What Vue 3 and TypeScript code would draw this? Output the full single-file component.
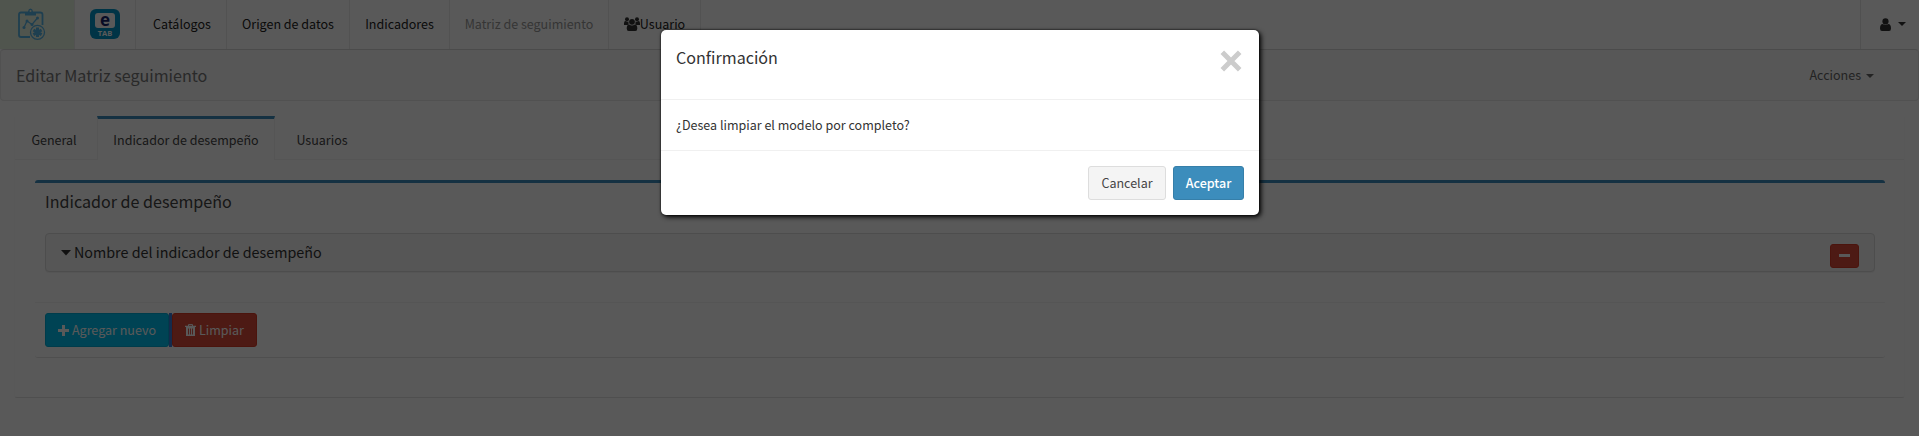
<script setup lang="ts">
import { ref } from 'vue'

interface NavItem {
  label: string
  key: string
  muted?: boolean
  icon?: boolean
}

const navItems: NavItem[] = [
  { label: 'Catálogos', key: 'catalogos' },
  { label: 'Origen de datos', key: 'origen' },
  { label: 'Indicadores', key: 'indicadores' },
  { label: 'Matriz de seguimiento', key: 'matriz', muted: true },
  { label: 'Usuario', key: 'usuario', icon: true },
]

const tabs = [
  { label: 'General', key: 'general' },
  { label: 'Indicador de desempeño', key: 'indicador' },
  { label: 'Usuarios', key: 'usuarios' },
]
const activeTab = ref('indicador')
const modalOpen = ref(true)
</script>

<template>
  <div class="page">
    <header class="topbar">
      <a class="brand">
        <svg width="29" height="33" viewBox="0 0 29 33" fill="none" stroke="#58b4e4">
          <path d="M8 4.500H4Q2 4.500 2 6.500V27Q2 29 4 29H13M19 4.500h4Q25.500 4.500 25.500 6.500V17" stroke-width="1.800" />
          <path d="M8 3.500h3Q11.500.6 13.500.6t2.500 2.900h3V7.500H8z" fill="#58b4e4" stroke="none" />
          <circle cx="13.500" cy="3" r="1" fill="#e6f2e0" stroke="none" />
          <path d="M7 19.500 10 13 15 16.500 20.500 10" stroke-width="1.300" />
          <g fill="#58b4e4" stroke="none">
            <circle cx="7" cy="19.500" r="1.500" /><circle cx="10" cy="13" r="1.500" />
            <circle cx="15" cy="16.500" r="1.500" /><circle cx="20.500" cy="10" r="1.500" />
          </g>
          <circle cx="20.500" cy="24.300" r="7" stroke-width="1.300" />
          <path d="M20.500 19.600v9.400M16.400 22l8.200 4.600M24.600 22l-8.200 4.600" stroke-width="3" />
        </svg>
      </a>
      <a class="etab">
        <span class="etab-logo"><span class="etab-e">e</span><span class="etab-t">TAB</span></span>
      </a>
      <a v-for="item in navItems" :key="item.key" class="nav-item" :class="[item.key, { muted: item.muted }]">
        <svg v-if="item.icon" width="16" height="14" viewBox="0 0 16 14" fill="#333">
          <circle cx="3" cy="2.200" r="2" /><circle cx="13" cy="2.200" r="2" />
          <path d="M0 8V6.200Q0 4 1.600 4q2 1 3 .5Q4 6.500 5 7.300L3.500 8zM16 8V6.200Q16 4 14.400 4q-2 1-3 .5Q12 6.500 11 7.300l1.500.7z" />
          <circle cx="8" cy="4.800" r="2.900" />
          <path d="M2.700 11.500Q2.700 7.600 5.200 7.600 8 9.600 10.800 7.600q2.500 0 2.500 3.900 0 2.500-2 2.500H4.700q-2 0-2-2.500z" />
        </svg>
        <span>{{ item.label }}</span>
      </a>
      <a class="user-menu">
        <svg width="11" height="13" viewBox="0 0 11 13" fill="#333">
          <circle cx="5.500" cy="3.400" r="3.100" />
          <path d="M0 10.500Q0 6 2.700 6q2.800 2 5.600 0Q11 6 11 10.500 11 13 9 13H2q-2 0-2-2.500z" />
        </svg>
        <i class="caret" />
      </a>
    </header>

    <nav class="subbar">
      <span class="sub-title">Editar Matriz seguimiento</span>
      <span class="actions">Acciones <i class="caret" /></span>
    </nav>

    <main class="tabs-box">
      <div class="tabs">
        <a v-for="t in tabs" :key="t.key" class="tab" :class="[t.key, { active: activeTab === t.key }]" @click="activeTab = t.key">{{ t.label }}</a>
      </div>
      <section class="box">
        <h3>Indicador de desempeño</h3>
        <div class="panel">
          <svg class="panel-caret" width="10" height="6" viewBox="0 0 10 6"><path d="M0 0h10L5 5.500z" fill="#333" /></svg>
          <span>Nombre del indicador de desempeño</span>
          <button class="minus" aria-label="Quitar"><i /></button>
        </div>
        <footer class="box-footer">
          <button class="btn info">
            <svg width="11" height="11" viewBox="0 0 11 11"><path d="M4 0h3v4h4v3H7v4H4V7H0V4h4z" fill="#fff" /></svg>
            <span>Agregar nuevo</span>
          </button>
          <i class="gap" />
          <button class="btn danger">
            <svg width="11" height="12" viewBox="0 0 11 12">
              <path d="M3.500 2V.6h4V2" fill="none" stroke="#fff" />
              <path d="M0 1.800h11V3H0zM1 3h9v9H1z" fill="#fff" />
              <path d="M3.500 4.500v6M5.500 4.500v6M7.500 4.500v6" stroke="#dd4b39" stroke-width=".9" />
            </svg>
            <span>Limpiar</span>
          </button>
        </footer>
      </section>
    </main>

    <div v-if="modalOpen" class="overlay">
      <div class="modal" role="dialog">
        <div class="modal-head">
          <span>Confirmación</span>
          <svg width="22" height="22" viewBox="0 0 22 22" @click="modalOpen = false"><path d="M2.300 2.300 19.700 19.700M19.700 2.300 2.300 19.700" stroke="#ccc" stroke-width="5" /></svg>
        </div>
        <div class="modal-body">¿Desea limpiar el modelo por completo?</div>
        <div class="modal-foot">
          <button class="btn default" @click="modalOpen = false">Cancelar</button>
          <button class="btn primary" @click="modalOpen = false">Aceptar</button>
        </div>
      </div>
    </div>
  </div>
</template>

<style>
html, body { margin: 0; overflow: hidden; }
</style>

<style scoped>
* { box-sizing: border-box; }
.page {
  position: relative;
  height: 436px;
  overflow: hidden;
  background: #fff;
  color: #333;
  font: 12.53px/20px "Noto Sans CJK SC", "Noto Sans", sans-serif;
  white-space: nowrap;
}
.topbar { display: flex; height: 49px; }
.topbar > a { border-right: 1px solid #eaeaea; flex: none; display: flex; }
.brand { width: 75px; padding: 8px 0 0 17px; background: #e6f2e0; }
.etab { width: 61px; padding: 9px 0 0 15px; }
.etab-logo {
  display: flex; flex-direction: column; align-items: center;
  width: 30px; height: 30px; border-radius: 6px; background: #0096c8; padding-top: 4px;
}
.etab-e {
  width: 20px; height: 15px; border-radius: 3px; background: #fff; color: #16246b;
  font: bold 17px/13px "Open Sans", sans-serif; text-align: center;
}
.etab-t { color: #fff; font: bold 7.5px/10px "Open Sans", sans-serif; }
.nav-item { align-items: center; justify-content: center; padding-bottom: 2px; color: #222; }
.nav-item.muted { color: #999; }
.catalogos { width: 91px; padding-left: 2px; }
.origen { width: 123px; }
.indicadores { width: 100px; }
.matriz { width: 159px; }
.usuario { width: 92px; }
.topbar > .user-menu {
  margin-left: auto; width: 59px; border-right: 0; border-left: 1px solid #e4e4e4;
  padding: 18px 0 0 19px; gap: 7px;
}
.caret { width: 0; height: 0; border: 4px solid transparent; border-top-color: currentColor; border-bottom: 0; }
.user-menu .caret { margin-top: 4px; }
.subbar {
  display: flex; align-items: center; justify-content: space-between;
  height: 52px; padding: 0 44px 1px 15px;
  border: 1px solid #e7e7e7; border-top-color: #d8d8d8; border-radius: 4px; background: #f8f8f8; color: #777;
}
.sub-title { font-size: 16.1px; }
.actions { display: flex; align-items: center; gap: 5px; color: #666; }
.actions .caret { margin-top: 3px; }
.tabs-box {
  margin: 15px 14px 0; height: 282px; border: 1px solid #fcfcfc;
  border-bottom-color: #e3e3e3; border-top: 0; border-radius: 3px;
}
.tabs { display: flex; height: 44px; border-bottom: 1px solid #f4f4f4; color: #444; }
.tab { height: 44px; padding-top: 11px; border-top: 3px solid transparent; text-align: center; }
.tab.active { border-top-color: #3c8dbc; border-left: 1px solid #f4f4f4; border-right: 1px solid #f4f4f4; background: #fff; }
.general { width: 82px; padding-right: 4px; }
.indicador { width: 178px; }
.usuarios { width: 94px; }
.box {
  margin: 20px 19px 0 20px; height: 178px; border-top: 3px solid #3c8dbc; border-radius: 3px;
  border-bottom: 1px solid #e3e3e3; display: flex; flex-direction: column; color: #444;
}
h3 { margin: 8px 10px 0; font-size: 16.1px; line-height: 20px; font-weight: 400; }
.panel {
  display: flex; margin: 22px 10px 0; height: 39px; padding: 8px 15px 0;
  border: 1px solid #ddd; border-radius: 4px; background: #f5f5f5; color: #333;
  font-size: 14.32px; line-height: 20px; box-shadow: 0 1px 1px rgba(0, 0, 0, .05);
}
.panel-caret { margin: 8px 3px 0 0; }
.minus {
  margin: 2px 0 0 auto; width: 29px; height: 24px; padding: 0; border: 1px solid #d73925;
  border-radius: 3px; background: #dd4b39; display: grid; place-items: center;
}
.minus i { width: 11px; height: 3px; background: #fff; margin-top: -1px; }
.box-footer { display: flex; margin-top: auto; height: 55px; padding: 10px; border-top: 1px solid #f4f4f4; }
.btn {
  display: flex; align-items: center; justify-content: center; height: 34px; padding: 0;
  border: 1px solid; border-radius: 3px; color: #fff; font: inherit;
}
.btn svg { margin-right: 3px; }
.info { width: 124px; background: #00c0ef; border-color: #00acd6; }
.danger { width: 85px; background: #dd4b39; border-color: #d73925; }
.gap { width: 3px; height: 34px; background: #3a7bdb; }
.overlay { position: absolute; inset: 0; background: rgba(0, 0, 0, .65); }
.modal {
  width: 598px; height: 185px; margin: 30px 0 0 661px; background: #fff; border-radius: 5px;
  box-shadow: 2px 2px 5px #000, 0 0 2px #000; color: #333;
}
.modal-head {
  display: flex; justify-content: space-between; height: 70px; padding: 17px 17px 0 15px;
  border-bottom: 1px solid #f0f0f0; font-size: 16.1px;
}
.modal-head svg { margin-top: 3px; }
.modal-body { height: 51px; padding: 15px; border-bottom: 1px solid #f0f0f0; }
.modal-foot { display: flex; justify-content: flex-end; gap: 7px; padding: 15px 15px 0; }
.default { width: 78px; background: #f4f4f4; border-color: #ddd; color: #444; }
.primary { width: 71px; background: #3c8dbc; border-color: #367fa9; font-weight: 500; }
</style>
